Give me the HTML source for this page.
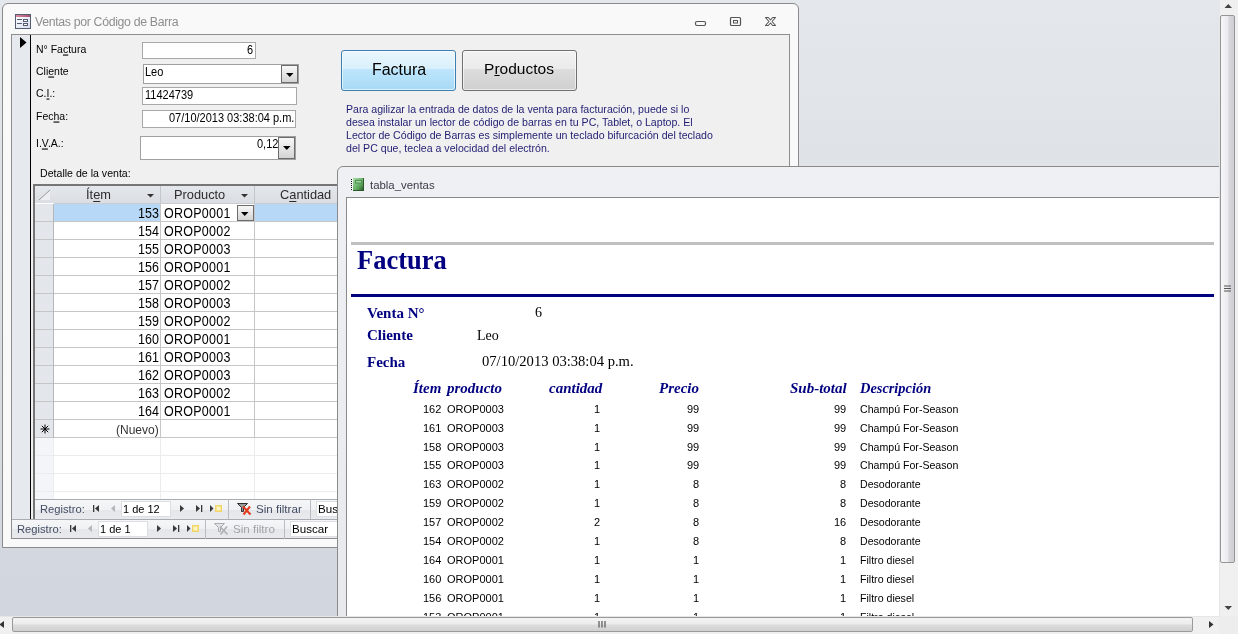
<!DOCTYPE html>
<html><head><meta charset="utf-8"><style>
*{margin:0;padding:0;box-sizing:border-box}
html,body{width:1238px;height:634px;overflow:hidden}
body{position:relative;font-family:"Liberation Sans",sans-serif;background:linear-gradient(#e4e7eb,#d1d5dd);}
.a{position:absolute}
.t{position:absolute;white-space:nowrap;line-height:0;will-change:transform}
u{text-decoration:underline;text-underline-offset:2px;text-decoration-thickness:1px}
svg{position:absolute;overflow:visible}
</style></head><body>
<div class="a" style="left:2px;top:3px;width:797px;height:545px;border:1px solid #8a8a8a;border-radius:6px 6px 0 0;background:#f9f9fa"></div>
<svg style="left:15px;top:14px" width="16" height="15" viewBox="0 0 16 15">
<defs><linearGradient id="fg" x1="0" y1="0" x2="1" y2="1"><stop offset="0" stop-color="#ffffff"/><stop offset="1" stop-color="#d8def0"/></linearGradient>
<linearGradient id="fr" x1="0" y1="0" x2="1" y2="0"><stop offset="0" stop-color="#d98aa2"/><stop offset="1" stop-color="#a8506e"/></linearGradient></defs>
<rect x="0.5" y="0.5" width="15" height="14" fill="url(#fg)" stroke="#555b70"/>
<rect x="1" y="1" width="14" height="2" fill="url(#fr)"/>
<rect x="2" y="5" width="5" height="1" fill="#555b70"/>
<rect x="2" y="9" width="5" height="1" fill="#555b70"/>
<rect x="8.5" y="5.5" width="4" height="2" fill="#fff" stroke="#555b70"/>
<rect x="8.5" y="9.5" width="4" height="2" fill="#fff" stroke="#555b70"/>
</svg>
<div class="t" style="left:35px;top:21.74px;font-size:12.3px;color:#8e8e8e;letter-spacing:-0.33px">Ventas por Código de Barra</div>
<svg style="left:694px;top:16px" width="90" height="12" viewBox="0 0 90 12">
<rect x="1.5" y="5.5" width="10" height="4" rx="1.5" fill="none" stroke="#555" stroke-width="1.2"/>
<rect x="36.5" y="1.5" width="10" height="8" rx="1" fill="none" stroke="#555" stroke-width="1.2"/>
<rect x="39.5" y="4.5" width="4" height="2.5" fill="none" stroke="#555" stroke-width="1"/>
<path d="M71.5 1.5 H74.3 L76.5 4 L78.7 1.5 H81.5 L78 5.5 L81.5 9.5 H78.7 L76.5 7 L74.3 9.5 H71.5 L75 5.5 Z" fill="#fff" stroke="#555" stroke-width="1.1" stroke-linejoin="round"/>
</svg>
<div class="a" style="left:11px;top:34px;width:779px;height:505px;border:1px solid #8e8e8e;background:#f0f0f0"></div>
<div class="a" style="left:12px;top:35px;width:18px;height:484px;background:#e6e9ee"></div>
<div class="a" style="left:30px;top:35px;width:1px;height:484px;background:#000"></div>
<svg style="left:20px;top:37px" width="8" height="12" viewBox="0 0 8 12"><path d="M0 0 L6.5 5.5 L0 11 Z" fill="#000"/></svg>
<div class="t" style="left:36px;top:49.36px;font-size:10.5px;color:#000;transform:scaleY(1.1)">N° Fa<u style="text-underline-offset:0.6px">c</u>tura</div>
<div class="t" style="left:36px;top:71.36px;font-size:10.5px;color:#000;transform:scaleY(1.1)">Cli<u style="text-underline-offset:0.6px">e</u>nte</div>
<div class="t" style="left:36px;top:93.36px;font-size:10.5px;color:#000;transform:scaleY(1.1)">C.<u style="text-underline-offset:0.6px">I</u>.:</div>
<div class="t" style="left:36px;top:116.36px;font-size:10.5px;color:#000;transform:scaleY(1.1)">Fec<u style="text-underline-offset:0.6px">h</u>a:</div>
<div class="t" style="left:36px;top:143.36px;font-size:10.5px;color:#000;transform:scaleY(1.1)">I.<u style="text-underline-offset:0.6px">V</u>.A.:</div>
<div class="t" style="left:40px;top:173.33px;font-size:10.6px;color:#000;transform:scaleY(1.1)">Detalle de la venta:</div>
<div class="a" style="left:142px;top:42px;width:114px;height:17px;background:#fff;border:1px solid #a8a8a8"></div>
<div class="t" style="right:985px;top:50.19px;font-size:11px;color:#000;transform:scaleY(1.1)">6</div>
<div class="a" style="left:143px;top:64px;width:156px;height:20px;background:#fff;border:1px solid #a0a0a0"></div>
<div class="t" style="left:145px;top:72.19px;font-size:11px;color:#000;transform:scaleY(1.1)">Leo</div>
<div class="a" style="left:281px;top:65px;width:17px;height:18px;border:1px solid #6c6c6c;background:linear-gradient(#f7f7f7,#e6e6e6 50%,#d4d4d4)"></div>
<svg style="left:286px;top:73px" width="8" height="5" viewBox="0 0 8 5"><path d="M0 0 H7.5 L3.75 4 Z" fill="#000"/></svg>
<div class="a" style="left:142px;top:87px;width:155px;height:18px;background:#fff;border:1px solid #a8a8a8"></div>
<div class="t" style="left:144.5px;top:95.19px;font-size:11px;color:#000;transform:scaleY(1.1)">11424739</div>
<div class="a" style="left:142px;top:110px;width:154px;height:18px;background:#fff;border:1px solid #a8a8a8"></div>
<div class="t" style="right:944px;top:118.19px;font-size:11px;color:#000;transform:scaleY(1.1)">07/10/2013 03:38:04 p.m.</div>
<div class="a" style="left:140px;top:136px;width:156px;height:24px;background:#fff;border:1px solid #a0a0a0"></div>
<div class="t" style="right:960px;top:144.19px;font-size:11px;color:#000;transform:scaleY(1.1)">0,12</div>
<div class="a" style="left:278px;top:137px;width:17px;height:22px;border:1px solid #6c6c6c;background:linear-gradient(#f7f7f7,#e6e6e6 50%,#d4d4d4)"></div>
<svg style="left:283px;top:146px" width="8" height="5" viewBox="0 0 8 5"><path d="M0 0 H7.5 L3.75 4 Z" fill="#000"/></svg>
<div class="a" style="left:341px;top:50px;width:115px;height:41px;border:1px solid #3c7fb1;border-radius:3px;background:linear-gradient(#eaf6fd,#d9f0fc 45%,#bee6fd 46%,#a7d9f5);box-shadow:inset 0 0 0 1px rgba(255,255,255,.6)"></div>
<div class="t" style="left:398.5px;top:70.46px;font-size:16px;color:#000;transform:translateX(-50%)">Factura</div>
<div class="a" style="left:462px;top:50px;width:115px;height:41px;border:1px solid #707070;border-radius:3px;background:linear-gradient(#f2f2f2,#ebebeb 45%,#dddddd 46%,#cfcfcf);box-shadow:inset 0 0 0 1px rgba(255,255,255,.6)"></div>
<div class="t" style="left:518.5px;top:68.63px;font-size:15.5px;color:#000;transform:translateX(-50%)">P<u style="text-underline-offset:1px">r</u>oductos</div>
<div class="t" style="left:345.5px;top:108.83px;font-size:10.6px;color:#201d72;transform:scaleY(1.1)">Para agilizar la entrada de datos de la venta para facturación, puede si lo</div>
<div class="t" style="left:345.5px;top:121.83px;font-size:10.6px;color:#201d72;transform:scaleY(1.1)">desea instalar un lector de código de barras en tu PC, Tablet, o Laptop. El</div>
<div class="t" style="left:345.5px;top:134.83px;font-size:10.6px;color:#201d72;transform:scaleY(1.1)">Lector de Código de Barras es simplemente un teclado bifurcación del teclado</div>
<div class="t" style="left:345.5px;top:147.83px;font-size:10.6px;color:#201d72;transform:scaleY(1.1)">del PC que, teclea a velocidad del electrón.</div>
<div class="a" style="left:33px;top:184px;width:312px;height:336px;border:2px solid #767676;border-right:none;background:#fff"></div>
<div class="a" style="left:35px;top:186px;width:310px;height:17px;background:linear-gradient(#e4e7eb,#dadee3)"></div>
<div class="a" style="left:54px;top:203px;width:291px;height:1px;background:#c9cdd2"></div>
<svg style="left:38px;top:189px" width="13" height="12" viewBox="0 0 13 12"><path d="M1 11 L12 1 L12 11 Z" fill="#eceef2"/><path d="M1 11 L12 1" stroke="#8a8e94" stroke-width="0.9"/></svg>
<div class="a" style="left:35px;top:204px;width:18px;height:234px;background:#e3e6ea"></div>
<div class="a" style="left:35px;top:438px;width:18px;height:61px;background:#f3f5f8"></div>
<div class="a" style="left:160px;top:186px;width:1px;height:17px;background:#c3c7cc"></div>
<div class="a" style="left:254px;top:186px;width:1px;height:17px;background:#c3c7cc"></div>
<div class="t" style="left:86px;top:194.56px;font-size:12.8px;color:#2c2c2c;">Ít<u style="text-underline-offset:1.5px">e</u>m</div>
<div class="t" style="left:174px;top:194.56px;font-size:12.8px;color:#2c2c2c;">Producto</div>
<div class="t" style="left:280px;top:194.56px;font-size:12.8px;color:#2c2c2c;">C<u style="text-underline-offset:1.5px">a</u>ntidad</div>
<svg style="left:147px;top:194px" width="7" height="4" viewBox="0 0 7 4"><path d="M0 0 H7 L3.5 3.5 Z" fill="#333"/></svg>
<svg style="left:241px;top:194px" width="7" height="4" viewBox="0 0 7 4"><path d="M0 0 H7 L3.5 3.5 Z" fill="#333"/></svg>
<div class="a" style="left:54px;top:204px;width:291px;height:17px;background:#b8d8f8"></div>
<div class="a" style="left:161px;top:204px;width:93px;height:17px;background:#fff"></div>
<div class="a" style="left:35px;top:221px;width:310px;height:1px;background:#c6c6c6"></div>
<div class="t" style="right:1079px;top:213.67px;font-size:12.5px;color:#000;transform:scaleY(1.11)">153</div>
<div class="t" style="left:164px;top:213.67px;font-size:12.5px;color:#000;transform:scaleY(1.11);letter-spacing:0.25px">OROP0001</div>
<div class="a" style="left:35px;top:239px;width:310px;height:1px;background:#c6c6c6"></div>
<div class="t" style="right:1079px;top:231.67px;font-size:12.5px;color:#000;transform:scaleY(1.11)">154</div>
<div class="t" style="left:164px;top:231.67px;font-size:12.5px;color:#000;transform:scaleY(1.11);letter-spacing:0.25px">OROP0002</div>
<div class="a" style="left:35px;top:257px;width:310px;height:1px;background:#c6c6c6"></div>
<div class="t" style="right:1079px;top:249.67px;font-size:12.5px;color:#000;transform:scaleY(1.11)">155</div>
<div class="t" style="left:164px;top:249.67px;font-size:12.5px;color:#000;transform:scaleY(1.11);letter-spacing:0.25px">OROP0003</div>
<div class="a" style="left:35px;top:275px;width:310px;height:1px;background:#c6c6c6"></div>
<div class="t" style="right:1079px;top:267.67px;font-size:12.5px;color:#000;transform:scaleY(1.11)">156</div>
<div class="t" style="left:164px;top:267.67px;font-size:12.5px;color:#000;transform:scaleY(1.11);letter-spacing:0.25px">OROP0001</div>
<div class="a" style="left:35px;top:293px;width:310px;height:1px;background:#c6c6c6"></div>
<div class="t" style="right:1079px;top:285.67px;font-size:12.5px;color:#000;transform:scaleY(1.11)">157</div>
<div class="t" style="left:164px;top:285.67px;font-size:12.5px;color:#000;transform:scaleY(1.11);letter-spacing:0.25px">OROP0002</div>
<div class="a" style="left:35px;top:311px;width:310px;height:1px;background:#c6c6c6"></div>
<div class="t" style="right:1079px;top:303.67px;font-size:12.5px;color:#000;transform:scaleY(1.11)">158</div>
<div class="t" style="left:164px;top:303.67px;font-size:12.5px;color:#000;transform:scaleY(1.11);letter-spacing:0.25px">OROP0003</div>
<div class="a" style="left:35px;top:329px;width:310px;height:1px;background:#c6c6c6"></div>
<div class="t" style="right:1079px;top:321.67px;font-size:12.5px;color:#000;transform:scaleY(1.11)">159</div>
<div class="t" style="left:164px;top:321.67px;font-size:12.5px;color:#000;transform:scaleY(1.11);letter-spacing:0.25px">OROP0002</div>
<div class="a" style="left:35px;top:347px;width:310px;height:1px;background:#c6c6c6"></div>
<div class="t" style="right:1079px;top:339.67px;font-size:12.5px;color:#000;transform:scaleY(1.11)">160</div>
<div class="t" style="left:164px;top:339.67px;font-size:12.5px;color:#000;transform:scaleY(1.11);letter-spacing:0.25px">OROP0001</div>
<div class="a" style="left:35px;top:365px;width:310px;height:1px;background:#c6c6c6"></div>
<div class="t" style="right:1079px;top:357.67px;font-size:12.5px;color:#000;transform:scaleY(1.11)">161</div>
<div class="t" style="left:164px;top:357.67px;font-size:12.5px;color:#000;transform:scaleY(1.11);letter-spacing:0.25px">OROP0003</div>
<div class="a" style="left:35px;top:383px;width:310px;height:1px;background:#c6c6c6"></div>
<div class="t" style="right:1079px;top:375.67px;font-size:12.5px;color:#000;transform:scaleY(1.11)">162</div>
<div class="t" style="left:164px;top:375.67px;font-size:12.5px;color:#000;transform:scaleY(1.11);letter-spacing:0.25px">OROP0003</div>
<div class="a" style="left:35px;top:401px;width:310px;height:1px;background:#c6c6c6"></div>
<div class="t" style="right:1079px;top:393.67px;font-size:12.5px;color:#000;transform:scaleY(1.11)">163</div>
<div class="t" style="left:164px;top:393.67px;font-size:12.5px;color:#000;transform:scaleY(1.11);letter-spacing:0.25px">OROP0002</div>
<div class="a" style="left:35px;top:419px;width:310px;height:1px;background:#c6c6c6"></div>
<div class="t" style="right:1079px;top:411.67px;font-size:12.5px;color:#000;transform:scaleY(1.11)">164</div>
<div class="t" style="left:164px;top:411.67px;font-size:12.5px;color:#000;transform:scaleY(1.11);letter-spacing:0.25px">OROP0001</div>
<div class="a" style="left:35px;top:437px;width:310px;height:1px;background:#c6c6c6"></div>
<div class="t" style="right:1079px;top:429.84px;font-size:12px;color:#333;">(Nuevo)</div>
<svg style="left:40px;top:424px" width="10" height="10" viewBox="0 0 10 10"><path d="M5 0.5 V9.5 M0.5 5 H9.5 M1.8 1.8 L8.2 8.2 M8.2 1.8 L1.8 8.2" stroke="#000" stroke-width="1"/></svg>
<div class="a" style="left:53px;top:204px;width:1px;height:234px;background:#b4b6ba"></div>
<div class="a" style="left:160px;top:204px;width:1px;height:234px;background:#c6c6c6"></div>
<div class="a" style="left:254px;top:204px;width:1px;height:234px;background:#c6c6c6"></div>
<div class="a" style="left:53px;top:438px;width:1px;height:61px;background:#eceef2"></div>
<div class="a" style="left:160px;top:438px;width:1px;height:61px;background:#ececec"></div>
<div class="a" style="left:254px;top:438px;width:1px;height:61px;background:#ececec"></div>
<div class="a" style="left:35px;top:455px;width:310px;height:1px;background:#ececec"></div>
<div class="a" style="left:35px;top:473px;width:310px;height:1px;background:#ececec"></div>
<div class="a" style="left:35px;top:491px;width:310px;height:1px;background:#ececec"></div>
<div class="a" style="left:237px;top:205px;width:17px;height:16px;border:1px solid #6c6c6c;background:linear-gradient(#f7f7f7,#e6e6e6 50%,#d4d4d4)"></div>
<svg style="left:241px;top:212px" width="8" height="5" viewBox="0 0 8 5"><path d="M0 0 H7.5 L3.75 4 Z" fill="#000"/></svg>
<div class="a" style="left:35px;top:499px;width:310px;height:1px;background:#a9acb0"></div>
<div class="a" style="left:35px;top:500px;width:310px;height:19px;background:linear-gradient(#f5f6f8,#eff1f3 50%,#e4e6ea 52%,#e8eaed)"></div>
<div class="a" style="left:12px;top:519px;width:333px;height:1px;background:#a9acb0"></div>
<div class="a" style="left:12px;top:520px;width:333px;height:18px;background:linear-gradient(#f5f6f8,#eff1f3 50%,#e4e6ea 52%,#e8eaed)"></div>
<div class="t" style="left:40px;top:509.12px;font-size:11.2px;color:#424c62;">Registro:</div>
<svg style="left:90px;top:505px" width="40" height="8" viewBox="0 0 40 8"><rect x="3" y="0" width="1.3" height="7" fill="#3a3a3a"/><path d="M9 0 V7 L5 3.5 Z" fill="#3a3a3a"/><path d="M25 0 V7 L21 3.5 Z" fill="#b4b6ba"/></svg>
<div class="a" style="left:121px;top:501px;width:50px;height:16px;background:#fff;border:1px solid #dcdee2"></div>
<div class="t" style="left:123px;top:509.19px;font-size:11px;color:#000;">1 de 12</div>
<svg style="left:178px;top:505px" width="46" height="8" viewBox="0 0 46 8"><path d="M2 0 V7 L6 3.5 Z" fill="#3a3a3a"/><path d="M18 0 V7 L22 3.5 Z" fill="#3a3a3a"/><rect x="23" y="0" width="1.3" height="7" fill="#3a3a3a"/><path d="M32 0 V7 L35.5 3.5 Z" fill="#3a3a3a"/><rect x="37" y="0" width="7" height="7" fill="#f7e38a"/><rect x="39" y="2" width="3" height="3" fill="#fff7c8"/><path d="M37.5 0.5 H43.5 V6.5 H37.5 Z" fill="none" stroke="#e9c84a" stroke-dasharray="1 1"/></svg>
<div class="a" style="left:228px;top:499px;width:1px;height:20px;background:#b9bcc0"></div>
<svg style="left:237px;top:503px" width="15" height="12" viewBox="0 0 15 12"><path d="M0.5 0.5 H10.5 L6.5 4.5 V8.5 H4.5 V4.5 Z" fill="#9a9a9a" stroke="#2e2e2e"/><path d="M6 3.5 L13.5 11.5 M13 3.5 L6.5 11.5" stroke="#e23a1a" stroke-width="2"/></svg>
<div class="t" style="left:256px;top:508.98px;font-size:11.6px;color:#424c62;">Sin filtrar</div>
<div class="a" style="left:310px;top:499px;width:1px;height:20px;background:#b9bcc0"></div>
<div class="a" style="left:316px;top:501px;width:29px;height:16px;background:#fff;border:1px solid #dcdee2"></div>
<div class="t" style="left:318px;top:508.98px;font-size:11.6px;color:#000;">Buscar</div>
<div class="t" style="left:17px;top:529.12px;font-size:11.2px;color:#424c62;">Registro:</div>
<svg style="left:67px;top:525px" width="40" height="8" viewBox="0 0 40 8"><rect x="3" y="0" width="1.3" height="7" fill="#3a3a3a"/><path d="M9 0 V7 L5 3.5 Z" fill="#3a3a3a"/><path d="M25 0 V7 L21 3.5 Z" fill="#b4b6ba"/></svg>
<div class="a" style="left:98px;top:521px;width:50px;height:16px;background:#fff;border:1px solid #dcdee2"></div>
<div class="t" style="left:100px;top:529.19px;font-size:11px;color:#000;">1 de 1</div>
<svg style="left:155px;top:525px" width="46" height="8" viewBox="0 0 46 8"><path d="M2 0 V7 L6 3.5 Z" fill="#3a3a3a"/><path d="M18 0 V7 L22 3.5 Z" fill="#3a3a3a"/><rect x="23" y="0" width="1.3" height="7" fill="#3a3a3a"/><path d="M32 0 V7 L35.5 3.5 Z" fill="#3a3a3a"/><rect x="37" y="0" width="7" height="7" fill="#f7e38a"/><rect x="39" y="2" width="3" height="3" fill="#fff7c8"/><path d="M37.5 0.5 H43.5 V6.5 H37.5 Z" fill="none" stroke="#e9c84a" stroke-dasharray="1 1"/></svg>
<div class="a" style="left:205px;top:519px;width:1px;height:20px;background:#b9bcc0"></div>
<svg style="left:214px;top:523px" width="15" height="12" viewBox="0 0 15 12"><path d="M0.5 0.5 H10.5 L6.5 4.5 V8.5 H4.5 V4.5 Z" fill="#e2e3e5" stroke="#a9acb0"/><path d="M6 3.5 L13.5 11.5 M13 3.5 L6.5 11.5" stroke="#b0b3b7" stroke-width="1.8"/></svg>
<div class="t" style="left:233px;top:528.98px;font-size:11.6px;color:#a0a3a8;">Sin filtro</div>
<div class="a" style="left:284px;top:519px;width:1px;height:20px;background:#b9bcc0"></div>
<div class="a" style="left:290px;top:521px;width:55px;height:16px;background:#fff;border:1px solid #dcdee2"></div>
<div class="t" style="left:292px;top:528.98px;font-size:11.6px;color:#000;">Buscar</div>
<div class="a" style="left:337px;top:166px;width:963px;height:534px;border:1px solid #8a8a8a;border-radius:6px 0 0 0;background:linear-gradient(#eef0f3,#e6e8ec)"></div>
<svg style="left:351px;top:178px" width="13" height="13" viewBox="0 0 13 13">
<defs><linearGradient id="bg1" x1="0" y1="0" x2="1" y2="1"><stop offset="0" stop-color="#a6dba6"/><stop offset="0.6" stop-color="#5ea85e"/><stop offset="1" stop-color="#1c4a1c"/></linearGradient></defs>
<rect x="2" y="0" width="11" height="13" fill="url(#bg1)"/>
<rect x="12" y="0" width="1" height="13" fill="#2a5a2a"/>
<rect x="2" y="12" width="11" height="1" fill="#2a5a2a"/>
<rect x="4.5" y="2.5" width="6" height="2.5" fill="#9fd59f" stroke="#4f8f4f"/>
<rect x="0" y="1" width="1" height="1" fill="#111"/><rect x="1" y="1" width="1" height="1" fill="#fff"/><rect x="0" y="3" width="1" height="1" fill="#111"/><rect x="1" y="3" width="1" height="1" fill="#fff"/><rect x="0" y="5" width="1" height="1" fill="#111"/><rect x="1" y="5" width="1" height="1" fill="#fff"/><rect x="0" y="7" width="1" height="1" fill="#111"/><rect x="1" y="7" width="1" height="1" fill="#fff"/><rect x="0" y="9" width="1" height="1" fill="#111"/><rect x="1" y="9" width="1" height="1" fill="#fff"/><rect x="0" y="11" width="1" height="1" fill="#111"/><rect x="1" y="11" width="1" height="1" fill="#fff"/>
</svg>
<div class="t" style="left:370px;top:185.05px;font-size:11.4px;color:#3a3a48;">tabla_ventas</div>
<div class="a" style="left:346px;top:197px;width:954px;height:503px;border-top:1px solid #8a8a8a;border-left:1px solid #8a8a8a;background:#fff"></div>
<div class="a" style="left:351px;top:242px;width:863px;height:3px;background:#c0c0c0"></div>
<div class="t" style="left:357px;top:260.06px;font-size:26.5px;color:#000080;font-family:'Liberation Serif',serif;font-weight:bold">Factura</div>
<div class="a" style="left:351px;top:294px;width:863px;height:3px;background:#000080"></div>
<div class="t" style="left:367px;top:312.94px;font-size:15px;color:#000080;font-family:'Liberation Serif',serif;font-weight:bold">Venta N°</div>
<div class="t" style="left:535px;top:313.27px;font-size:14px;color:#000;font-family:'Liberation Serif',serif;">6</div>
<div class="t" style="left:367px;top:334.94px;font-size:15px;color:#000080;font-family:'Liberation Serif',serif;font-weight:bold">Cliente</div>
<div class="t" style="left:477px;top:336.27px;font-size:14px;color:#000;font-family:'Liberation Serif',serif;">Leo</div>
<div class="t" style="left:367px;top:361.94px;font-size:15px;color:#000080;font-family:'Liberation Serif',serif;font-weight:bold">Fecha</div>
<div class="t" style="left:482px;top:361.07px;font-size:14.6px;color:#000;font-family:'Liberation Serif',serif;">07/10/2013 03:38:04 p.m.</div>
<div class="t" style="left:413px;top:387.94px;font-size:15px;color:#000080;font-family:'Liberation Serif',serif;font-weight:bold;font-style:italic">Ítem</div>
<div class="t" style="left:447px;top:387.94px;font-size:15px;color:#000080;font-family:'Liberation Serif',serif;font-weight:bold;font-style:italic">producto</div>
<div class="t" style="right:636px;top:387.94px;font-size:15px;color:#000080;font-family:'Liberation Serif',serif;font-weight:bold;font-style:italic">cantidad</div>
<div class="t" style="right:539px;top:387.94px;font-size:15px;color:#000080;font-family:'Liberation Serif',serif;font-weight:bold;font-style:italic">Precio</div>
<div class="t" style="right:391px;top:387.94px;font-size:15px;color:#000080;font-family:'Liberation Serif',serif;font-weight:bold;font-style:italic">Sub-total</div>
<div class="t" style="left:860px;top:388.14px;font-size:14.4px;color:#000080;font-family:'Liberation Serif',serif;font-weight:bold;font-style:italic">Descripción</div>
<div class="t" style="right:797px;top:409.19px;font-size:11px;color:#000;">162</div>
<div class="t" style="left:447px;top:409.19px;font-size:11px;color:#000;letter-spacing:0">OROP0003</div>
<div class="t" style="right:638px;top:409.19px;font-size:11px;color:#000;">1</div>
<div class="t" style="right:539px;top:409.19px;font-size:11px;color:#000;">99</div>
<div class="t" style="right:392px;top:409.19px;font-size:11px;color:#000;">99</div>
<div class="t" style="left:860px;top:409.33px;font-size:10.6px;color:#000;">Champú For-Season</div>
<div class="t" style="right:797px;top:428.19px;font-size:11px;color:#000;">161</div>
<div class="t" style="left:447px;top:428.19px;font-size:11px;color:#000;letter-spacing:0">OROP0003</div>
<div class="t" style="right:638px;top:428.19px;font-size:11px;color:#000;">1</div>
<div class="t" style="right:539px;top:428.19px;font-size:11px;color:#000;">99</div>
<div class="t" style="right:392px;top:428.19px;font-size:11px;color:#000;">99</div>
<div class="t" style="left:860px;top:428.33px;font-size:10.6px;color:#000;">Champú For-Season</div>
<div class="t" style="right:797px;top:447.19px;font-size:11px;color:#000;">158</div>
<div class="t" style="left:447px;top:447.19px;font-size:11px;color:#000;letter-spacing:0">OROP0003</div>
<div class="t" style="right:638px;top:447.19px;font-size:11px;color:#000;">1</div>
<div class="t" style="right:539px;top:447.19px;font-size:11px;color:#000;">99</div>
<div class="t" style="right:392px;top:447.19px;font-size:11px;color:#000;">99</div>
<div class="t" style="left:860px;top:447.33px;font-size:10.6px;color:#000;">Champú For-Season</div>
<div class="t" style="right:797px;top:465.19px;font-size:11px;color:#000;">155</div>
<div class="t" style="left:447px;top:465.19px;font-size:11px;color:#000;letter-spacing:0">OROP0003</div>
<div class="t" style="right:638px;top:465.19px;font-size:11px;color:#000;">1</div>
<div class="t" style="right:539px;top:465.19px;font-size:11px;color:#000;">99</div>
<div class="t" style="right:392px;top:465.19px;font-size:11px;color:#000;">99</div>
<div class="t" style="left:860px;top:465.33px;font-size:10.6px;color:#000;">Champú For-Season</div>
<div class="t" style="right:797px;top:484.19px;font-size:11px;color:#000;">163</div>
<div class="t" style="left:447px;top:484.19px;font-size:11px;color:#000;letter-spacing:0">OROP0002</div>
<div class="t" style="right:638px;top:484.19px;font-size:11px;color:#000;">1</div>
<div class="t" style="right:539px;top:484.19px;font-size:11px;color:#000;">8</div>
<div class="t" style="right:392px;top:484.19px;font-size:11px;color:#000;">8</div>
<div class="t" style="left:860px;top:484.33px;font-size:10.6px;color:#000;">Desodorante</div>
<div class="t" style="right:797px;top:503.19px;font-size:11px;color:#000;">159</div>
<div class="t" style="left:447px;top:503.19px;font-size:11px;color:#000;letter-spacing:0">OROP0002</div>
<div class="t" style="right:638px;top:503.19px;font-size:11px;color:#000;">1</div>
<div class="t" style="right:539px;top:503.19px;font-size:11px;color:#000;">8</div>
<div class="t" style="right:392px;top:503.19px;font-size:11px;color:#000;">8</div>
<div class="t" style="left:860px;top:503.33px;font-size:10.6px;color:#000;">Desodorante</div>
<div class="t" style="right:797px;top:522.19px;font-size:11px;color:#000;">157</div>
<div class="t" style="left:447px;top:522.19px;font-size:11px;color:#000;letter-spacing:0">OROP0002</div>
<div class="t" style="right:638px;top:522.19px;font-size:11px;color:#000;">2</div>
<div class="t" style="right:539px;top:522.19px;font-size:11px;color:#000;">8</div>
<div class="t" style="right:392px;top:522.19px;font-size:11px;color:#000;">16</div>
<div class="t" style="left:860px;top:522.33px;font-size:10.6px;color:#000;">Desodorante</div>
<div class="t" style="right:797px;top:541.19px;font-size:11px;color:#000;">154</div>
<div class="t" style="left:447px;top:541.19px;font-size:11px;color:#000;letter-spacing:0">OROP0002</div>
<div class="t" style="right:638px;top:541.19px;font-size:11px;color:#000;">1</div>
<div class="t" style="right:539px;top:541.19px;font-size:11px;color:#000;">8</div>
<div class="t" style="right:392px;top:541.19px;font-size:11px;color:#000;">8</div>
<div class="t" style="left:860px;top:541.33px;font-size:10.6px;color:#000;">Desodorante</div>
<div class="t" style="right:797px;top:560.19px;font-size:11px;color:#000;">164</div>
<div class="t" style="left:447px;top:560.19px;font-size:11px;color:#000;letter-spacing:0">OROP0001</div>
<div class="t" style="right:638px;top:560.19px;font-size:11px;color:#000;">1</div>
<div class="t" style="right:539px;top:560.19px;font-size:11px;color:#000;">1</div>
<div class="t" style="right:392px;top:560.19px;font-size:11px;color:#000;">1</div>
<div class="t" style="left:860px;top:560.33px;font-size:10.6px;color:#000;">Filtro diesel</div>
<div class="t" style="right:797px;top:579.19px;font-size:11px;color:#000;">160</div>
<div class="t" style="left:447px;top:579.19px;font-size:11px;color:#000;letter-spacing:0">OROP0001</div>
<div class="t" style="right:638px;top:579.19px;font-size:11px;color:#000;">1</div>
<div class="t" style="right:539px;top:579.19px;font-size:11px;color:#000;">1</div>
<div class="t" style="right:392px;top:579.19px;font-size:11px;color:#000;">1</div>
<div class="t" style="left:860px;top:579.33px;font-size:10.6px;color:#000;">Filtro diesel</div>
<div class="t" style="right:797px;top:598.19px;font-size:11px;color:#000;">156</div>
<div class="t" style="left:447px;top:598.19px;font-size:11px;color:#000;letter-spacing:0">OROP0001</div>
<div class="t" style="right:638px;top:598.19px;font-size:11px;color:#000;">1</div>
<div class="t" style="right:539px;top:598.19px;font-size:11px;color:#000;">1</div>
<div class="t" style="right:392px;top:598.19px;font-size:11px;color:#000;">1</div>
<div class="t" style="left:860px;top:598.33px;font-size:10.6px;color:#000;">Filtro diesel</div>
<div class="t" style="right:797px;top:617.19px;font-size:11px;color:#000;">153</div>
<div class="t" style="left:447px;top:617.19px;font-size:11px;color:#000;letter-spacing:0">OROP0001</div>
<div class="t" style="right:638px;top:617.19px;font-size:11px;color:#000;">1</div>
<div class="t" style="right:539px;top:617.19px;font-size:11px;color:#000;">1</div>
<div class="t" style="right:392px;top:617.19px;font-size:11px;color:#000;">1</div>
<div class="t" style="left:860px;top:617.33px;font-size:10.6px;color:#000;">Filtro diesel</div>
<div class="a" style="left:1219px;top:0px;width:19px;height:616px;background:#f0f0f0;border-left:1px solid #e6e6e6"></div>
<svg style="left:1224px;top:3px" width="9" height="6" viewBox="0 0 9 6"><path d="M0.5 5 L4.3 1 L8 5 Z" fill="#444"/></svg>
<div class="a" style="left:1220px;top:15px;width:15px;height:548px;border:1px solid #959595;border-radius:2px;background:linear-gradient(90deg,#f6f6f8,#ececee 50%,#d8d8dc 62%,#cfcfd3)"></div>
<svg style="left:1224px;top:285px" width="8" height="7" viewBox="0 0 8 7"><path d="M0 1 H7 M0 3.5 H7 M0 6 H7" stroke="#555" stroke-width="1.2"/></svg>
<svg style="left:1224px;top:606px" width="9" height="5" viewBox="0 0 9 5"><path d="M0.5 0 L4.3 4 L8 0 Z" fill="#444"/></svg>
<div class="a" style="left:0px;top:616px;width:1219px;height:18px;background:#f0f0f0;border-top:1px solid #e6e6e6"></div>
<svg style="left:-1px;top:621px" width="5" height="8" viewBox="0 0 5 8"><path d="M5 0 L0.5 3.5 L5 7 Z" fill="#333"/></svg>
<div class="a" style="left:12px;top:617px;width:1181px;height:15px;border:1px solid #9a9a9a;border-radius:2px;background:linear-gradient(#f4f4f4,#ececec 45%,#dcdcdc 55%,#d0d0d0)"></div>
<svg style="left:598px;top:621px" width="8" height="7" viewBox="0 0 8 7"><path d="M1 0 V6.5 M4 0 V6.5 M7 0 V6.5" stroke="#555" stroke-width="1.2"/></svg>
<svg style="left:1209px;top:621px" width="5" height="8" viewBox="0 0 5 8"><path d="M0 0 L4.5 3.5 L0 7 Z" fill="#333"/></svg>
<div class="a" style="left:1219px;top:616px;width:19px;height:18px;background:#ededed"></div>
</body></html>
